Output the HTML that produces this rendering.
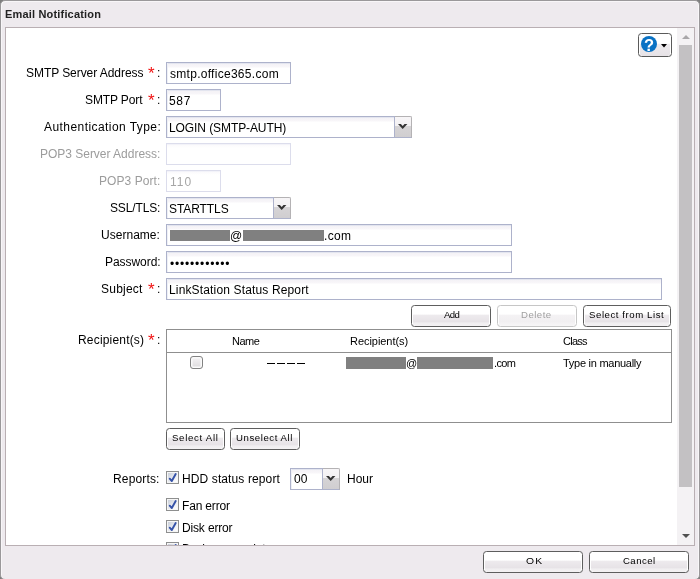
<!DOCTYPE html>
<html><head><meta charset="utf-8"><title>Email Notification</title>
<style>
*{box-sizing:border-box;margin:0;padding:0}
html,body{width:700px;height:579px;overflow:hidden;background:#7d7d7d}
body{font-family:"Liberation Sans",sans-serif;font-size:12px;color:#000;position:relative}
div,span.tx,svg{position:absolute}
#win{left:0;top:0;width:700px;height:580px;background:#eeeaee;border:1px solid #9a989a;border-radius:5px;box-shadow:inset 1px 1px 0 #f8f6f8,inset -1px 0 0 #f8f6f8}
#panel{left:5px;top:27px;width:690px;height:519px;background:#fff;border:1px solid #b9afb3;overflow:hidden}
#clip{left:6px;top:28px;width:671px;height:517px;overflow:hidden}
span.tx{white-space:pre;line-height:1;display:block;will-change:transform}
.inp{border:1px solid #adb2cb;background:linear-gradient(to bottom,#e3e5ef 0,#e3e5ef 1px,#f4f2f6 1px,#f8f6f9 4px,#fff 5px);box-shadow:inset 1px 0 0 #eef0f6}
.inp.dis{border-color:#dcddec;background:linear-gradient(to bottom,#f3f3f9 0,#f3f3f9 1px,#fbfafc 1px,#fff 4px);box-shadow:none}
.trig{border:1px solid #b4b2b4;border-left:none;border-bottom-color:#adb2cb;border-radius:0 2px 0 0;background:linear-gradient(#f7f5f7 0,#f3f1f3 45%,#d6d4d6 45%,#d0ced0 100%)}
.btn{border:1px solid #5e5e5e;border-radius:3.5px;background:linear-gradient(#ffffff 0,#ffffff 40%,#edeaed 47%,#e7e3e7 78%,#f0eef0 85%,#f4f2f4 100%);box-shadow:inset 1px 0 0 #fff,inset -1px 0 0 #fff}
.btn.dis{border-color:#c6c6c6;background:linear-gradient(#ffffff 0,#ffffff 40%,#f4f2f4 47%,#f1eff1 78%,#f7f6f7 100%)}
.red{background:#808080}
.cb{border:1px solid #828282;border-radius:3px;background:linear-gradient(#f6f4f6,#dcdadc);box-shadow:inset 0 0 0 1.5px #fafafa}
.ck{border:1px solid #8e8f8f;background:linear-gradient(135deg,#dfe3e8,#f6f7f9);box-shadow:inset 0 0 0 1px #f4f4f4}
</style></head><body>
<div id="win"></div>
<div id="panel"></div>
<div id="clip" style="left:0;top:0;width:677px;height:545px">
<div class="inp" style="left:166px;top:62px;width:125px;height:22px;"></div>
<div class="inp" style="left:166px;top:89px;width:55px;height:22px;"></div>
<div class="inp" style="left:166px;top:116px;width:229px;height:22px;"></div>
<div class="trig" style="left:395px;top:116px;width:17px;height:22px;"></div>
<div class="inp dis" style="left:166px;top:143px;width:125px;height:22px;"></div>
<div class="inp dis" style="left:166px;top:170px;width:55px;height:22px;"></div>
<div class="inp" style="left:166px;top:197px;width:108px;height:22px;"></div>
<div class="trig" style="left:274px;top:197px;width:17px;height:22px;"></div>
<div class="inp" style="left:166px;top:224px;width:346px;height:22px;"></div>
<div class="inp" style="left:166px;top:251px;width:346px;height:22px;"></div>
<div class="inp" style="left:166px;top:278px;width:496px;height:22px;"></div>
<div class="inp" style="left:290px;top:468px;width:33px;height:22px;"></div>
<div class="trig" style="left:323px;top:468px;width:17px;height:22px;"></div>
<svg width="10" height="6" viewBox="0 0 10 6" style="left:397.7px;top:124px"><path d="M0 0 H2.9 L4.7 1.9 L6.5 0 H9.4 L4.7 5 Z" fill="#333"/></svg>
<svg width="10" height="6" viewBox="0 0 10 6" style="left:276.7px;top:205px"><path d="M0 0 H2.9 L4.7 1.9 L6.5 0 H9.4 L4.7 5 Z" fill="#333"/></svg>
<svg width="10" height="6" viewBox="0 0 10 6" style="left:326.2px;top:476px"><path d="M0 0 H2.9 L4.7 1.9 L6.5 0 H9.4 L4.7 5 Z" fill="#333"/></svg>
<div class="" style="left:166px;top:329px;width:506px;height:94px;border:1px solid #8f8f8f;background:#fff"></div>
<div class="" style="left:167px;top:352px;width:504px;height:1px;background:#8f8f8f"></div>
<div class="cb" style="left:190px;top:356px;width:13px;height:13px;"></div>
<div class="" style="left:267px;top:363px;width:8px;height:1px;background:#000"></div>
<div class="" style="left:277px;top:363px;width:8px;height:1px;background:#000"></div>
<div class="" style="left:287px;top:363px;width:8px;height:1px;background:#000"></div>
<div class="" style="left:297px;top:363px;width:8px;height:1px;background:#000"></div>
<div class="red" style="left:170px;top:230px;width:60px;height:11px;"></div>
<div class="red" style="left:243px;top:230px;width:81px;height:11px;"></div>
<div class="red" style="left:346px;top:357px;width:60px;height:12px;"></div>
<div class="red" style="left:417px;top:357px;width:76px;height:12px;"></div>
<div class="btn" style="left:411px;top:305px;width:80px;height:22px;"></div>
<div class="btn dis" style="left:497px;top:305px;width:80px;height:22px;"></div>
<div class="btn" style="left:583px;top:305px;width:88px;height:22px;"></div>
<div class="btn" style="left:166px;top:428px;width:59px;height:22px;"></div>
<div class="btn" style="left:230px;top:428px;width:70px;height:22px;"></div>
<svg width="13" height="13" viewBox="0 0 13 13" style="left:166px;top:471px"><defs><linearGradient id="g0" x1="0" y1="0" x2="1" y2="1"><stop offset="0" stop-color="#c9cfda"/><stop offset="0.6" stop-color="#eceef2"/><stop offset="1" stop-color="#ffffff"/></linearGradient></defs><rect x="0.5" y="0.5" width="12" height="12" fill="#f6f6f6" stroke="#8e8f8f"/><rect x="2" y="2" width="9" height="9" fill="url(#g0)"/><path d="M3.7 7.7 L5.8 10 L9.7 3" fill="none" stroke="#3552a8" stroke-width="1.9" stroke-linecap="round" stroke-linejoin="round"/></svg>
<svg width="13" height="13" viewBox="0 0 13 13" style="left:166px;top:498px"><defs><linearGradient id="g1" x1="0" y1="0" x2="1" y2="1"><stop offset="0" stop-color="#c9cfda"/><stop offset="0.6" stop-color="#eceef2"/><stop offset="1" stop-color="#ffffff"/></linearGradient></defs><rect x="0.5" y="0.5" width="12" height="12" fill="#f6f6f6" stroke="#8e8f8f"/><rect x="2" y="2" width="9" height="9" fill="url(#g1)"/><path d="M3.7 7.7 L5.8 10 L9.7 3" fill="none" stroke="#3552a8" stroke-width="1.9" stroke-linecap="round" stroke-linejoin="round"/></svg>
<svg width="13" height="13" viewBox="0 0 13 13" style="left:166px;top:520px"><defs><linearGradient id="g2" x1="0" y1="0" x2="1" y2="1"><stop offset="0" stop-color="#c9cfda"/><stop offset="0.6" stop-color="#eceef2"/><stop offset="1" stop-color="#ffffff"/></linearGradient></defs><rect x="0.5" y="0.5" width="12" height="12" fill="#f6f6f6" stroke="#8e8f8f"/><rect x="2" y="2" width="9" height="9" fill="url(#g2)"/><path d="M3.7 7.7 L5.8 10 L9.7 3" fill="none" stroke="#3552a8" stroke-width="1.9" stroke-linecap="round" stroke-linejoin="round"/></svg>
<svg width="13" height="13" viewBox="0 0 13 13" style="left:166px;top:542px"><defs><linearGradient id="g3" x1="0" y1="0" x2="1" y2="1"><stop offset="0" stop-color="#c9cfda"/><stop offset="0.6" stop-color="#eceef2"/><stop offset="1" stop-color="#ffffff"/></linearGradient></defs><rect x="0.5" y="0.5" width="12" height="12" fill="#f6f6f6" stroke="#8e8f8f"/><rect x="2" y="2" width="9" height="9" fill="url(#g3)"/><path d="M3.7 7.7 L5.8 10 L9.7 3" fill="none" stroke="#3552a8" stroke-width="1.9" stroke-linecap="round" stroke-linejoin="round"/></svg>
<div class="btn" style="left:638px;top:33px;width:34px;height:24px;border-color:#5a5a5a;background:linear-gradient(#ffffff 0,#ffffff 42%,#edeaed 48%,#e6e2e6 100%)"></div>
<svg width="16" height="16" viewBox="0 0 16 16" style="left:641px;top:36px"><circle cx="8" cy="8" r="8" fill="#0a72c4"/></svg>
<span class="tx" style="left:644.4px;top:36.6px;font-size:16.5px;font-weight:bold;color:#fff">?</span>
<svg width="6" height="4" viewBox="0 0 6 4" style="left:660.5px;top:44px"><path d="M0 0 H6 L3 3.4 Z" fill="#000"/></svg>
<span class="tx" id="t0" style="left:5.00px;top:8.69px;font-size:11px;color:#222;font-weight:bold;letter-spacing:0.176px">Email Notification</span>
<span class="tx" id="t1" style="left:26.00px;top:66.84px;font-size:12px;color:#000;font-weight:normal;letter-spacing:-0.056px">SMTP Server Address</span>
<span class="tx" id="t2" style="left:85.00px;top:93.84px;font-size:12px;color:#000;font-weight:normal;letter-spacing:-0.125px">SMTP Port</span>
<span class="tx" id="t3" style="left:43.60px;top:120.84px;font-size:12px;color:#000;font-weight:normal;letter-spacing:0.432px">Authentication Type:</span>
<span class="tx" id="t4" style="left:40.00px;top:147.84px;font-size:12px;color:#9c9c9c;font-weight:normal;letter-spacing:-0.021px">POP3 Server Address:</span>
<span class="tx" id="t5" style="left:99.00px;top:174.84px;font-size:12px;color:#9c9c9c;font-weight:normal;letter-spacing:0.067px">POP3 Port:</span>
<span class="tx" id="t6" style="left:109.60px;top:201.84px;font-size:12px;color:#000;font-weight:normal;letter-spacing:-0.143px">SSL/TLS:</span>
<span class="tx" id="t7" style="left:101.40px;top:228.84px;font-size:12px;color:#000;font-weight:normal;letter-spacing:0.025px">Username:</span>
<span class="tx" id="t8" style="left:105.00px;top:255.84px;font-size:12px;color:#000;font-weight:normal;letter-spacing:-0.050px">Password:</span>
<span class="tx" id="t9" style="left:100.60px;top:282.84px;font-size:12px;color:#000;font-weight:normal;letter-spacing:0.233px">Subject</span>
<span class="tx" id="t10" style="left:77.60px;top:333.84px;font-size:12px;color:#000;font-weight:normal;letter-spacing:0.182px">Recipient(s)</span>
<span class="tx" id="t11" style="left:113.40px;top:472.84px;font-size:12px;color:#000;font-weight:normal;letter-spacing:0.143px">Reports:</span>
<span class="tx" id="t12" style="left:147.60px;top:64.61px;font-size:17px;color:#f01010;font-weight:normal;letter-spacing:0.000px">*</span>
<span class="tx" id="t13" style="left:157.00px;top:66.84px;font-size:12px;color:#000;font-weight:normal;letter-spacing:0.000px">:</span>
<span class="tx" id="t14" style="left:147.60px;top:91.61px;font-size:17px;color:#f01010;font-weight:normal;letter-spacing:0.000px">*</span>
<span class="tx" id="t15" style="left:157.00px;top:93.84px;font-size:12px;color:#000;font-weight:normal;letter-spacing:0.000px">:</span>
<span class="tx" id="t16" style="left:147.60px;top:280.61px;font-size:17px;color:#f01010;font-weight:normal;letter-spacing:0.000px">*</span>
<span class="tx" id="t17" style="left:157.00px;top:282.84px;font-size:12px;color:#000;font-weight:normal;letter-spacing:0.000px">:</span>
<span class="tx" id="t18" style="left:147.60px;top:331.61px;font-size:17px;color:#f01010;font-weight:normal;letter-spacing:0.000px">*</span>
<span class="tx" id="t19" style="left:157.00px;top:333.84px;font-size:12px;color:#000;font-weight:normal;letter-spacing:0.000px">:</span>
<span class="tx" id="t20" style="left:170.00px;top:67.84px;font-size:12px;color:#000;font-weight:normal;letter-spacing:0.282px">smtp.office365.com</span>
<span class="tx" id="t21" style="left:169.00px;top:94.84px;font-size:12px;color:#000;font-weight:normal;letter-spacing:0.700px">587</span>
<span class="tx" id="t22" style="left:169.00px;top:121.84px;font-size:12px;color:#000;font-weight:normal;letter-spacing:-0.087px">LOGIN (SMTP-AUTH)</span>
<span class="tx" id="t23" style="left:170.00px;top:175.84px;font-size:12px;color:#a6a6a6;font-weight:normal;letter-spacing:1.000px">110</span>
<span class="tx" id="t24" style="left:169.00px;top:202.84px;font-size:12px;color:#000;font-weight:normal;letter-spacing:-0.086px">STARTTLS</span>
<span class="tx" id="t25" style="left:230.40px;top:229.84px;font-size:12px;color:#000;font-weight:normal;letter-spacing:0.000px">@</span>
<span class="tx" id="t26" style="left:324.00px;top:229.84px;font-size:12px;color:#000;font-weight:normal;letter-spacing:0.333px">.com</span>
<span class="tx" id="t27" style="left:169.00px;top:283.84px;font-size:12px;color:#000;font-weight:normal;letter-spacing:0.150px">LinkStation Status Report</span>
<span class="tx" id="t28" style="left:170.00px;top:258.34px;font-size:12px;color:#000;font-weight:normal;letter-spacing:0.818px">&#8226;&#8226;&#8226;&#8226;&#8226;&#8226;&#8226;&#8226;&#8226;&#8226;&#8226;&#8226;</span>
<span class="tx" id="t29" style="left:294.00px;top:472.84px;font-size:12px;color:#000;font-weight:normal;letter-spacing:0.000px">00</span>
<span class="tx" id="t30" style="left:182.00px;top:472.84px;font-size:12px;color:#000;font-weight:normal;letter-spacing:0.112px">HDD status report</span>
<span class="tx" id="t31" style="left:347.00px;top:472.84px;font-size:12px;color:#000;font-weight:normal;letter-spacing:0.000px">Hour</span>
<span class="tx" id="t32" style="left:182.00px;top:499.84px;font-size:12px;color:#000;font-weight:normal;letter-spacing:-0.175px">Fan error</span>
<span class="tx" id="t33" style="left:182.00px;top:521.84px;font-size:12px;color:#000;font-weight:normal;letter-spacing:-0.156px">Disk error</span>
<span class="tx" id="t34" style="left:182.00px;top:542.84px;font-size:12px;color:#000;font-weight:normal;letter-spacing:-0.143px">Backup complete</span>
<span class="tx" id="t35" style="left:231.60px;top:335.69px;font-size:11px;color:#000;font-weight:normal;letter-spacing:-0.533px">Name</span>
<span class="tx" id="t36" style="left:349.50px;top:335.69px;font-size:11px;color:#000;font-weight:normal;letter-spacing:-0.045px">Recipient(s)</span>
<span class="tx" id="t37" style="left:563.00px;top:335.69px;font-size:11px;color:#000;font-weight:normal;letter-spacing:-0.750px">Class</span>
<span class="tx" id="t38" style="left:406.00px;top:357.69px;font-size:11px;color:#000;font-weight:normal;letter-spacing:0.000px">@</span>
<span class="tx" id="t39" style="left:493.60px;top:357.69px;font-size:11px;color:#000;font-weight:normal;letter-spacing:-0.600px">.com</span>
<span class="tx" id="t40" style="left:563.00px;top:357.69px;font-size:11px;color:#000;font-weight:normal;letter-spacing:-0.267px">Type in manually</span>
<span class="tx" id="t41" style="left:443.60px;top:309.87px;font-size:9.6px;color:#000;font-weight:normal;letter-spacing:-0.600px">Add</span>
<span class="tx" id="t42" style="left:521.00px;top:309.87px;font-size:9.6px;color:#a0a0a0;font-weight:normal;letter-spacing:0.480px">Delete</span>
<span class="tx" id="t43" style="left:589.00px;top:309.87px;font-size:9.6px;color:#000;font-weight:normal;letter-spacing:0.573px">Select from List</span>
<span class="tx" id="t44" style="left:172.00px;top:432.87px;font-size:9.6px;color:#000;font-weight:normal;letter-spacing:0.711px">Select All</span>
<span class="tx" id="t45" style="left:236.10px;top:432.87px;font-size:9.6px;color:#000;font-weight:normal;letter-spacing:0.573px">Unselect All</span>
</div>
<div class="" style="left:677px;top:28px;width:17px;height:517px;background:#f4f2f4"></div>
<div class="" style="left:679px;top:45px;width:13px;height:442px;background:#c3c1c3"></div>
<svg width="8" height="4" viewBox="0 0 8 4" style="left:681.5px;top:35px"><path d="M0 4 H8 L4 0 Z" fill="#a9a7a9"/></svg>
<svg width="8" height="4" viewBox="0 0 8 4" style="left:681.5px;top:534px"><path d="M0 0 H8 L4 4 Z" fill="#505050"/></svg>
<div class="btn" style="left:483px;top:551px;width:100px;height:22px;"></div>
<div class="btn" style="left:589px;top:551px;width:100px;height:22px;"></div>
<span class="tx" id="t46" style="left:525.60px;top:555.87px;font-size:9.6px;color:#000;font-weight:normal;letter-spacing:1.200px;transform:scaleX(1.08);transform-origin:0 0">OK</span>
<span class="tx" id="t47" style="left:623.00px;top:555.87px;font-size:9.6px;color:#000;font-weight:normal;letter-spacing:0.440px">Cancel</span>
</body></html>
